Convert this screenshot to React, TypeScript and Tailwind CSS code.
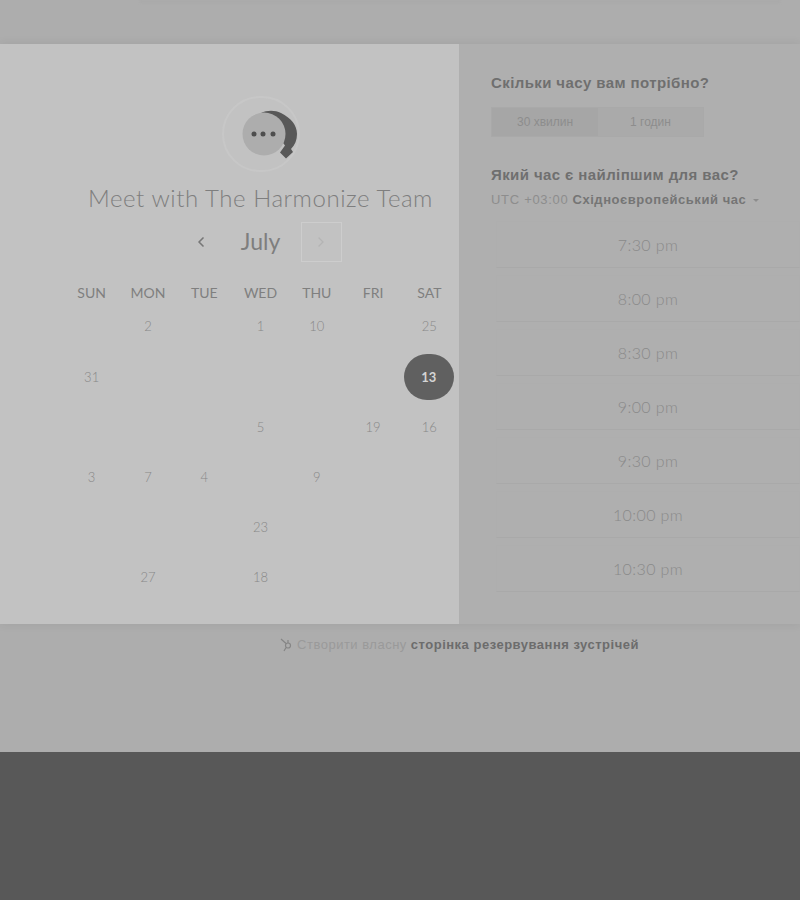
import { ChevronLeft, ChevronRight } from 'lucide-react';

const days = ['SUN', 'MON', 'TUE', 'WED', 'THU', 'FRI', 'SAT'];

// empty strings are the days that have faded out of the picture
const weeks = [
    ['', '2', '', '1', '10', '', '25'],
    ['31', '', '', '', '', '', '13'],
    ['', '', '', '5', '', '19', '16'],
    ['3', '7', '4', '', '9', '', ''],
    ['', '', '', '23', '', '', ''],
    ['', '27', '', '18', '', '', ''],
];

const times = ['7:30 pm', '8:00 pm', '8:30 pm', '9:00 pm', '9:30 pm', '10:00 pm', '10:30 pm'];

function Logo() {
    return (
        <div className="h-[76px] w-[78px] rounded-full border-2 border-[#c7c7c7] flex items-center justify-center">
            <svg width="60" height="60" viewBox="0 0 60 60" className="overflow-visible">
                <path
                    d="M30 9C36 6 44 6 50 9c10 5 16 12 16 21 0 6-2 11-6 15l2 3-7 6.500-6-6 5-7z"
                    fill="#585858"
                />
                <circle cx="33" cy="30" r="21.500" fill="#adadad" />
                <circle cx="23" cy="30" r="2.500" fill="#4e4e4e" />
                <circle cx="32" cy="30" r="2.500" fill="#4e4e4e" />
                <circle cx="42" cy="30" r="2.500" fill="#4e4e4e" />
            </svg>
        </div>
    );
}

function Calendar() {
    return (
        <section className="w-[459px] h-[580px] bg-[#c2c2c2] flex flex-col items-center pt-[52px] pl-[62px] font-['Lato',sans-serif]">
            <Logo />
            <h1 className="mt-[10px] whitespace-nowrap text-[24px] leading-[32px] font-light tracking-[0.55px] text-[#7e7e7e]">
                Meet with The Harmonize Team
            </h1>
            <div className="mt-[8px] ml-[13px] h-[40px] flex items-center">
                <ChevronLeft className="h-4 w-4 text-[#777777] mr-[25px]" strokeWidth={2.5} />
                <span className="w-[54px] pb-[2px] text-center text-[23px] whitespace-nowrap text-[#7e7e7e]">July</span>
                <div className="ml-[13px] h-[40px] w-[41px] border border-[#cdcdcd] flex items-center justify-center">
                    <ChevronRight className="h-4 w-4 text-[#b4b4b4]" />
                </div>
            </div>
            <div className="mt-[21px] w-[394px] grid grid-cols-7 text-center">
                {days.map((d) => (
                    <div key={d} className="h-[19px] leading-[19px] text-[14px] text-[#7f7f7f]">
                        {d}
                    </div>
                ))}
                {weeks.flat().map((n, i) => (
                    <div key={i} className="h-[50.200px] flex items-center justify-center text-[13px] font-light text-[#888888]">
                        {n === '13' ? (
                            <span className="h-[46px] w-[50px] mr-[1px] rounded-full bg-[#606060] flex items-center justify-center font-bold text-[#d4d4d4]">
                                {n}
                            </span>
                        ) : (
                            n
                        )}
                    </div>
                ))}
            </div>
        </section>
    );
}

function TimePicker() {
    return (
        <section className="flex-1 min-w-0 pl-[32px] pt-[30px] font-['Liberation_Sans',sans-serif]">
            <h2 className="text-[15px] leading-[18px] font-bold tracking-[0.4px] text-[#6f6f6f]">
                Скільки часу вам потрібно?
            </h2>
            <div className="mt-[15px] w-[213px] h-[30px] flex text-[12px] text-[#8d8d8d] border border-[#a9a9a9]">
                <div className="w-[106px] bg-[#a6a6a6] flex items-center justify-center">30 хвилин</div>
                <div className="flex-1 bg-[#aaaaaa] flex items-center justify-center">1 годин</div>
            </div>
            <h2 className="mt-[29px] text-[15px] leading-[18px] font-bold tracking-[0.4px] text-[#6f6f6f]">
                Який час є найліпшим для вас?
            </h2>
            <div className="mt-[8px] flex items-center text-[13px] leading-[16px] tracking-[0.7px] text-[#8d8d8d]">
                UTC +03:00
                <span className="ml-1 font-bold tracking-[0.55px] text-[#757575]">Східноєвропейський час</span>
                <span className="ml-[7px] h-0 w-0 border-x-[3px] border-t-[3px] border-x-transparent border-t-[#8d8d8d]" />
            </div>
            <ul className="mt-[13px] ml-[5px] font-['Lato',sans-serif]">
                {times.map((t) => (
                    <li
                        key={t}
                        className="h-[47px] mb-[7px] flex items-center justify-center text-[16px] font-light tracking-[0.4px] text-[#8a8a8a] border border-[#aeaeae] border-b-[#a9a9a9]"
                    >
                        {t}
                    </li>
                ))}
            </ul>
        </section>
    );
}

export default function App() {
    return (
        <div className="w-[800px] h-[900px] overflow-hidden bg-[#585858]">
            <div className="h-[752px] bg-[#adadad]">
                {/* bottom edge of the page heading, cut off by the top of the frame */}
                <div className="ml-[140px] w-[640px] h-[3px] bg-[#a9a9a9] blur-[1px]" />
                <div className="mt-[41px] flex h-[580px] bg-[#afafaf] shadow-[0_0_10px_rgba(0,0,0,0.07)]">
                    <Calendar />
                    <TimePicker />
                </div>
                <footer className="mt-[12px] pl-[118px] flex items-center justify-center text-[13px] leading-[18px] tracking-[0.5px] font-['Liberation_Sans',sans-serif] text-[#9a9a9a]">
                    <svg width="16" height="16" viewBox="0 0 16 16" fill="none" stroke="#858585" strokeWidth="1.200" className="mr-[2px]">
                        <circle cx="9" cy="8.500" r="2.500" />
                        <path d="M7 6.500 2 2M9 6V3M7 10.500 5 14" />
                    </svg>
                    Створити власну
                    <span className="ml-1 font-bold text-[#6c6c6c]">сторінка резервування зустрічей</span>
                </footer>
            </div>
        </div>
    );
}
